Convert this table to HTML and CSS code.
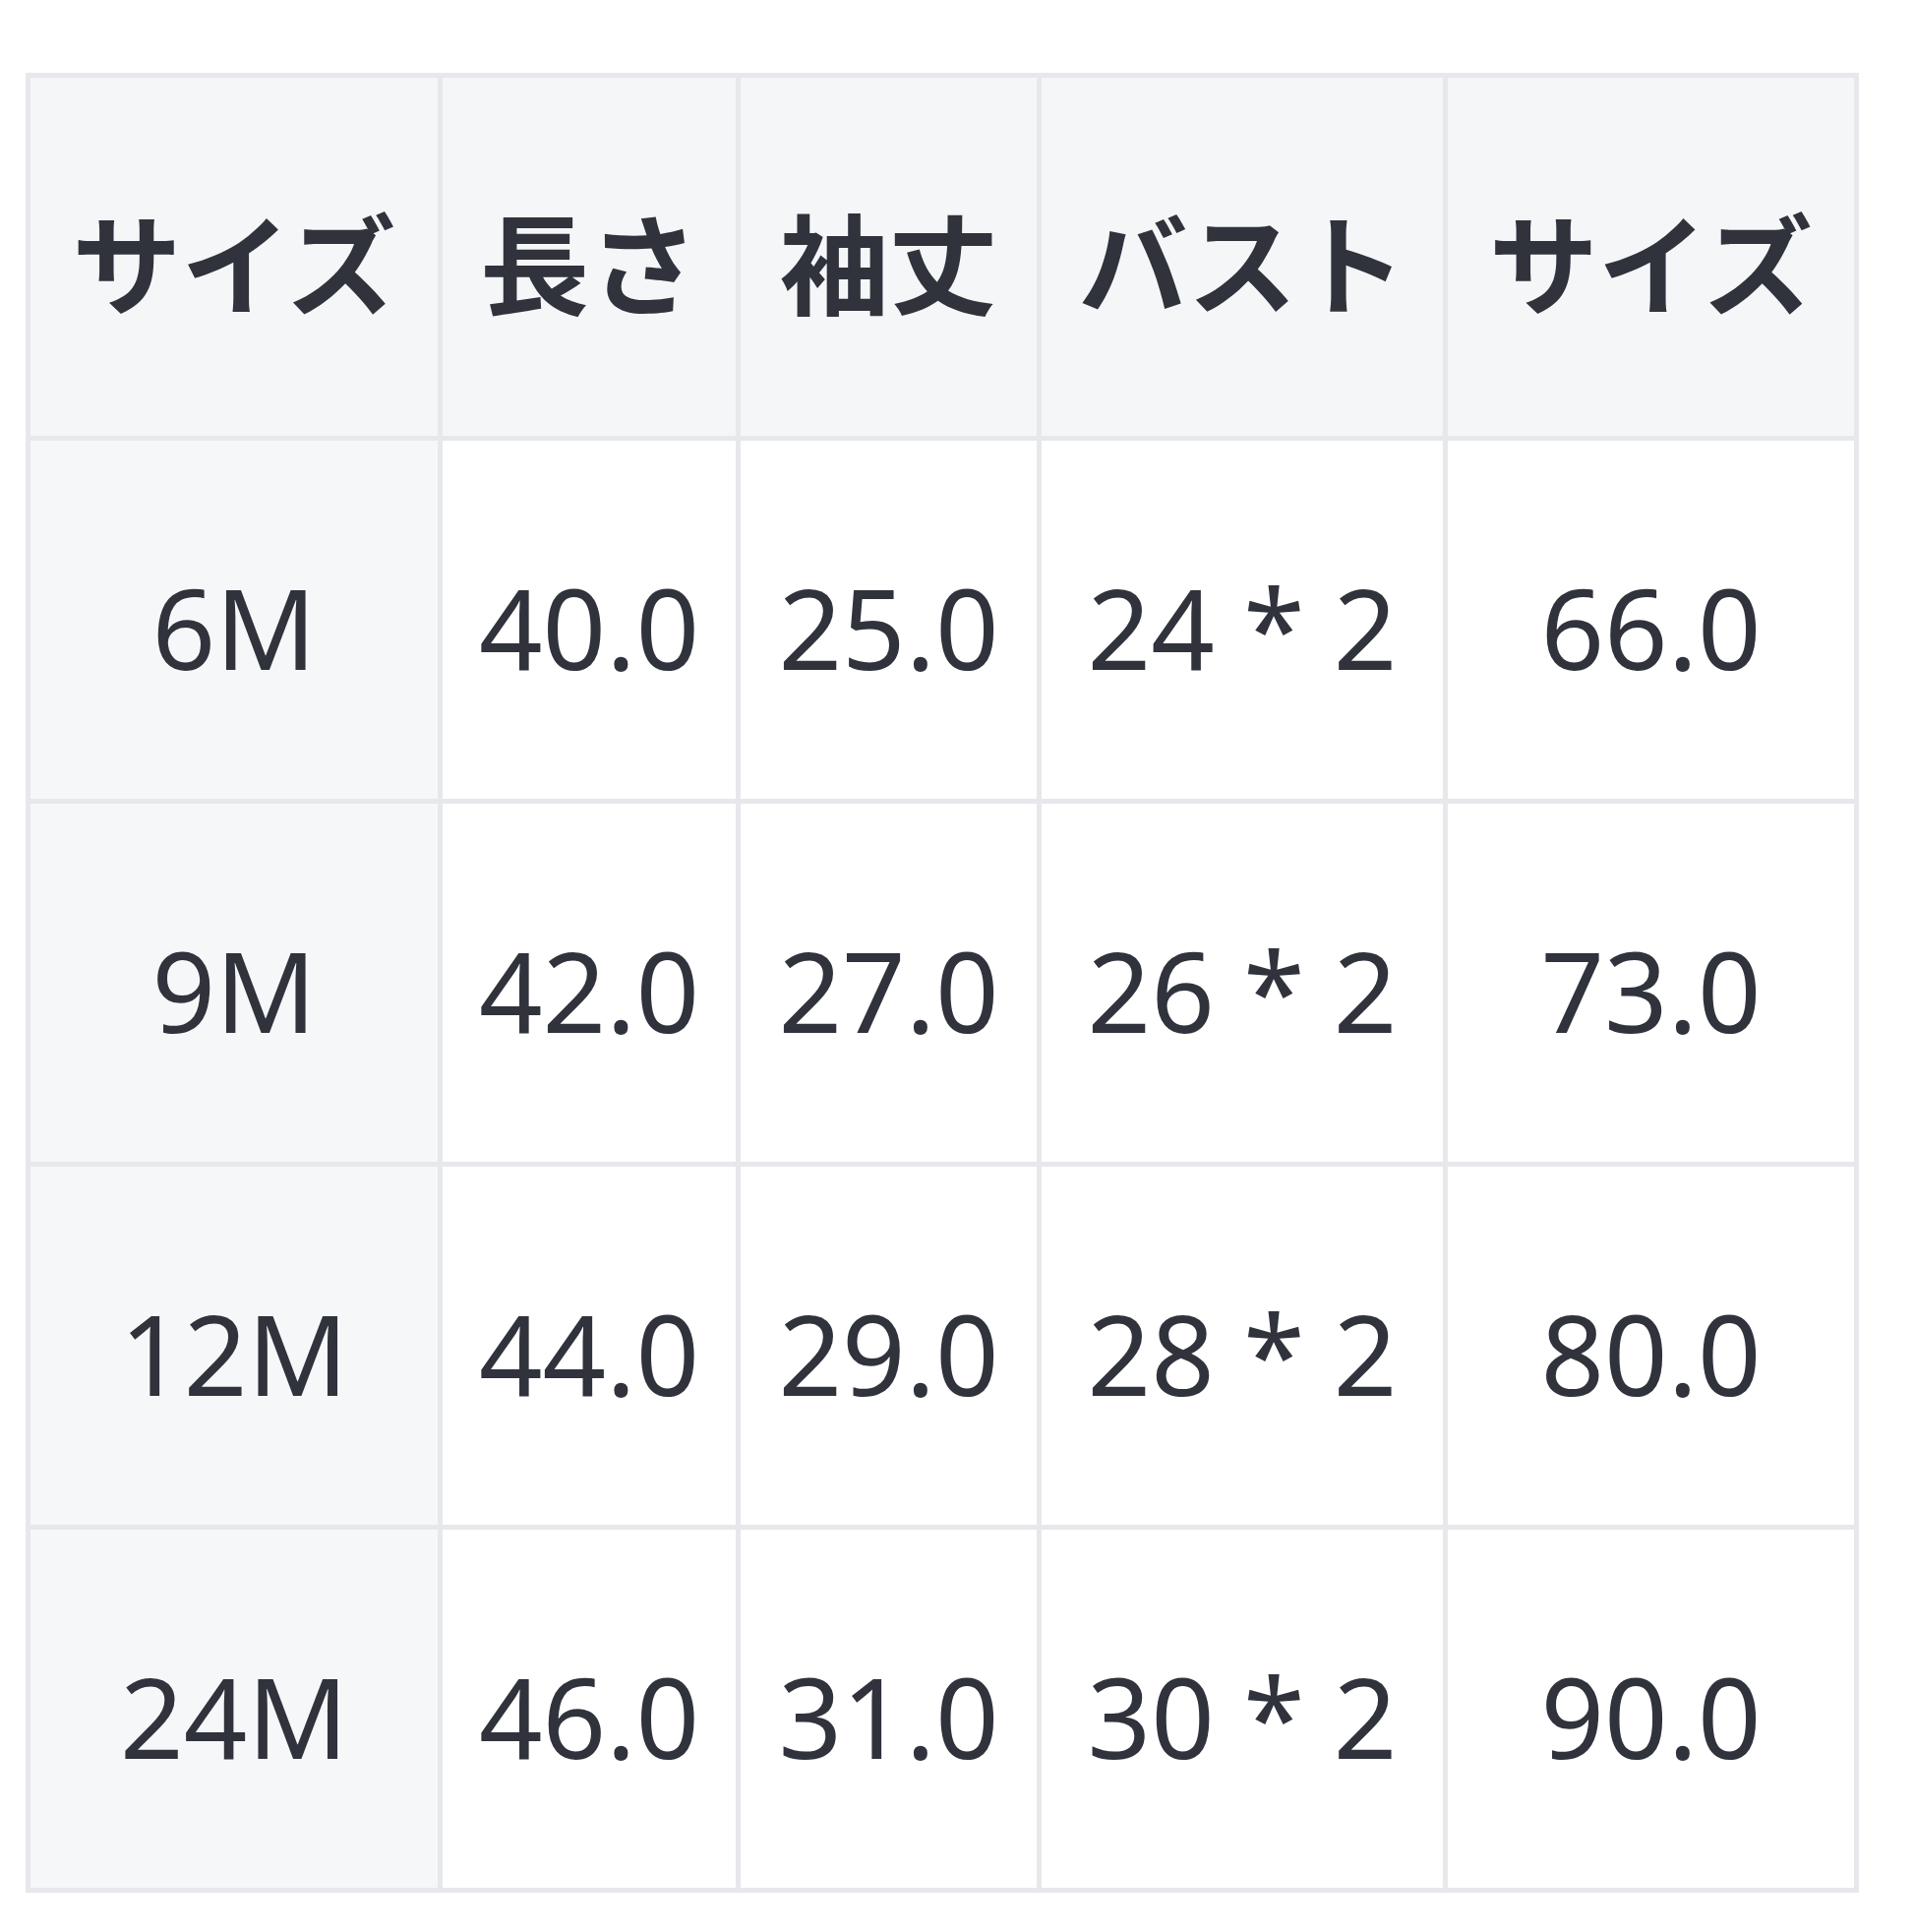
FILE: index.html
```html
<!DOCTYPE html>
<html lang="ja">
<head>
<meta charset="utf-8">
<link rel="stylesheet" href="styles.css">
</head>
<body>
<div class="wrap">
  <div class="table" role="table">
    <div class="cell head" role="columnheader">サイズ</div>
    <div class="cell head" role="columnheader">長さ</div>
    <div class="cell head" role="columnheader">袖丈</div>
    <div class="cell head" role="columnheader">バスト</div>
    <div class="cell head" role="columnheader">サイズ</div>

    <div class="cell first">6M</div>
    <div class="cell">40.0</div>
    <div class="cell">25.0</div>
    <div class="cell">24 * 2</div>
    <div class="cell">66.0</div>

    <div class="cell first">9M</div>
    <div class="cell">42.0</div>
    <div class="cell">27.0</div>
    <div class="cell">26 * 2</div>
    <div class="cell">73.0</div>

    <div class="cell first">12M</div>
    <div class="cell">44.0</div>
    <div class="cell">29.0</div>
    <div class="cell">28 * 2</div>
    <div class="cell">80.0</div>

    <div class="cell first">24M</div>
    <div class="cell">46.0</div>
    <div class="cell">31.0</div>
    <div class="cell">30 * 2</div>
    <div class="cell">90.0</div>
  </div>
</div>
</body>
</html>
```

FILE: styles.css
```css
html, body {
  margin: 0;
  padding: 0;
  background: #ffffff;
}

.wrap {
  padding: 74px 0 0 26px;
}

.table {
  display: grid;
  grid-template-columns: 419px 303px 306px 413px 418px;
  grid-auto-rows: 369px;
  width: max-content;
  border-top: 5px solid #e7e8eb;
  border-left: 5px solid #e7e8eb;
  font-family: "Noto Sans", "Noto Sans CJK JP", sans-serif;
  font-size: 113px;
  color: #30333c;
}

.cell {
  box-sizing: border-box;
  border-right: 5px solid #e7e8eb;
  border-bottom: 5px solid #e7e8eb;
  display: flex;
  align-items: center;
  justify-content: center;
  background: #ffffff;
  white-space: nowrap;
  padding-top: 16px;
  line-height: 1.36;
}

.head {
  background: #f5f6f8;
  font-weight: 700;
  font-size: 111px;
  padding-top: 16px;
}

.first {
  background: #f6f7f9;
}
```
